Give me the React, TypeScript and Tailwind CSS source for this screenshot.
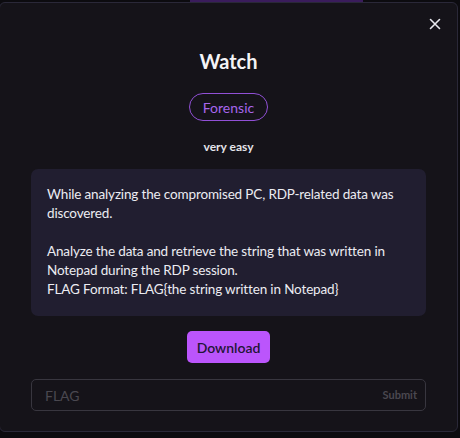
import React from "react";

export default function App() {
  return (
    <div
      className="w-[460px] h-[438px] bg-[#0c0b0f] overflow-hidden relative"
      style={{ fontFamily: "Lato, 'Noto Sans', sans-serif" }}
    >
      <div className="absolute top-0 left-[190px] w-[173px] h-[2px] bg-[#3a1c5c]" />
      <div className="pt-[2px]">
        <div className="ml-[-1px] w-[459px] h-[430px] bg-[#151319] border border-[#2a2838] rounded-[6px] relative flex flex-col items-center">
          <button className="absolute top-[15px] right-[16px] text-[#e8e8ee]">
            <svg width="12" height="12" viewBox="0 0 12 12" fill="none" stroke="currentColor" strokeWidth="1.6" strokeLinecap="round">
              <path d="M1.5 1.5 L10.5 10.5 M10.5 1.5 L1.5 10.5" />
            </svg>
          </button>
          <h1 className="mt-[44px] text-[20px] leading-[28px] font-bold text-[#f4f4f6]">Watch</h1>
          <div className="mt-[18px] h-[28px] px-[13px] rounded-full border border-[#9150d6] text-[#a766ec] text-[14px] flex items-center">
            Forensic
          </div>
          <div className="mt-[18px] text-[12px] font-bold text-[#e4e4ea] leading-[16px]">very easy</div>
          <div className="mt-[14px] w-[395px] bg-[#211e30] rounded-[7px] px-[16px] pt-[16px] pb-[17px] text-[13.5px] tracking-[-0.15px] leading-[19px] text-[#ececf2] whitespace-pre-line">
            {"While analyzing the compromised PC, RDP-related data was discovered.\n\nAnalyze the data and retrieve the string that was written in Notepad during the RDP session.\nFLAG Format: FLAG{the string written in Notepad}"}
          </div>
          <button className="mt-[15px] w-[83px] h-[32px] rounded-[5px] bg-[#bb55fc] text-[#231536] text-[14px] font-semibold flex items-center justify-center">
            Download
          </button>
          <div className="mt-[16px] w-[395px] h-[32px] rounded-[5px] border border-[#38363f] flex items-center justify-between pl-[13px] pr-[8px]">
            <span className="text-[14px] text-[#4a4850]">FLAG</span>
            <span className="text-[11px] font-bold text-[#4a4850]">Submit</span>
          </div>
        </div>
      </div>
    </div>
  );
}
